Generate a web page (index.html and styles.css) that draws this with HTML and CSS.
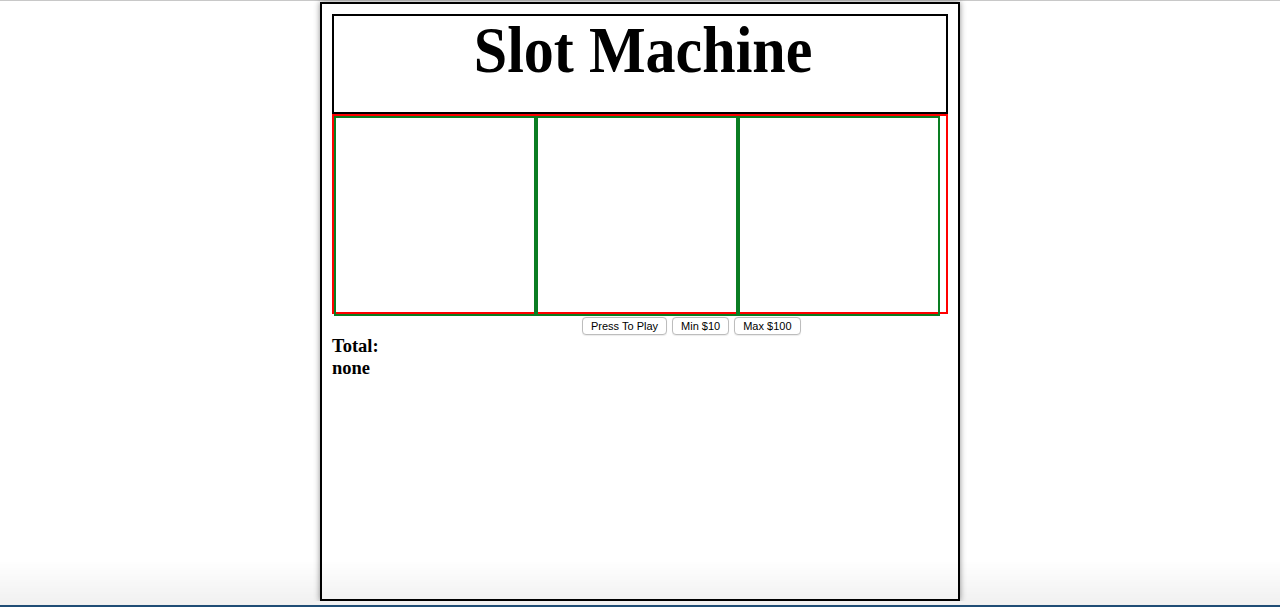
FILE: index.html
```html
<!DOCTYPE html>
<html lang="en">
<head>
<meta charset="utf-8">
<title>Slot Machine</title>
<link rel="stylesheet" href="styles.css">
</head>
<body>
<div class="topline"></div>
<main class="machine">
  <header class="title-box">
    <h1 class="title"><span class="title-text">Slot Machine</span></h1>
  </header>
  <section class="reels">
    <div class="reel"></div>
    <div class="reel"></div>
    <div class="reel"></div>
  </section>
  <div class="controls">
    <button class="btn">Press To Play</button>
    <button class="btn">Min $10</button>
    <button class="btn">Max $100</button>
  </div>
  <div class="total">
    <h3 class="total-line">Total:</h3>
    <h3 class="total-line">none</h3>
  </div>
</main>
<div class="screen-fade"></div>
<div class="screen-strip"></div>
</body>
</html>
```

FILE: styles.css
```css
* { box-sizing: border-box; }

html, body {
  margin: 0;
  padding: 0;
  background: #fff;
  font-family: "Liberation Serif", "Times New Roman", serif;
  color: #000;
  overflow: hidden;
}

.topline {
  height: 1px;
  background: #c8c8c8;
}

.machine {
  width: 640px;
  height: 599px;
  margin: 1px auto 0;
  border: 2px solid #000;
  padding: 10px;
  box-shadow: 0 0 6px rgba(0, 0, 0, 0.45);
  background: #fff;
}

.title-box {
  height: 100px;
  border: 2px solid #000;
  padding-top: 1px;
}

.title {
  margin: 0;
  padding-left: 6px;
  text-align: center;
  font-size: 66px;
  line-height: 66px;
  font-weight: bold;
}

.title-text {
  display: inline-block;
  transform: scaleX(0.91);
  transform-origin: center;
}

.reels {
  height: 200px;
  border: 2px solid #ff0000;
  display: flex;
  align-items: flex-start;
}

.reel {
  width: 202px;
  height: 200px;
  flex: none;
  border: 2px solid #0a7d22;
}

.controls {
  display: flex;
  gap: 5px;
  padding: 3px 0 0 250px;
}

.btn {
  height: 18px;
  padding: 0 8px;
  font: 11px "Liberation Sans", Arial, sans-serif;
  color: #000;
  background: #fff;
  border: 1px solid #bdbdbd;
  border-radius: 4px;
  box-shadow: 0 0.5px 1px rgba(0, 0, 0, 0.08);
}

.total-line {
  margin: 0;
  font-size: 18.5px;
  line-height: 22px;
  font-weight: bold;
}

.screen-fade {
  position: fixed;
  left: 0;
  right: 0;
  bottom: 2px;
  height: 45px;
  background: linear-gradient(to bottom, rgba(0, 0, 0, 0), rgba(0, 0, 0, 0.06));
  pointer-events: none;
}

.screen-strip {
  position: fixed;
  left: 0;
  right: 0;
  bottom: 0;
  height: 2px;
  background: #1f4d75;
  pointer-events: none;
}
```
